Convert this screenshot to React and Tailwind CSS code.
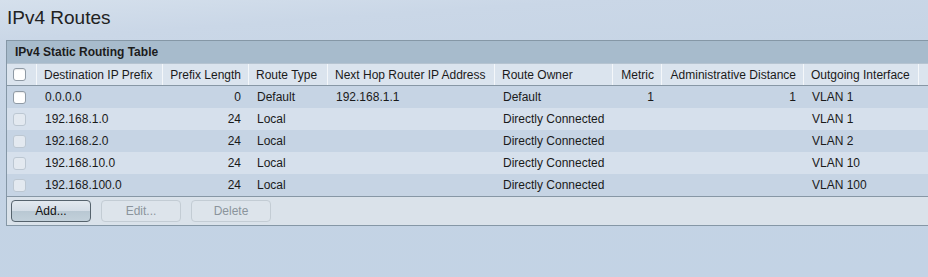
import React from "react";

const cols = [
  { w: 30, key: "cb" },
  { w: 126, key: "dest", label: "Destination IP Prefix" },
  { w: 86, key: "len", label: "Prefix Length", right: true },
  { w: 79, key: "type", label: "Route Type" },
  { w: 167, key: "hop", label: "Next Hop Router IP Address" },
  { w: 118, key: "owner", label: "Route Owner" },
  { w: 49, key: "metric", label: "Metric", right: true },
  { w: 142, key: "ad", label: "Administrative Distance", right: true },
  { w: 115, key: "out", label: "Outgoing Interface" },
  { w: 40, key: "x", label: "" },
];

const rows = [
  { dest: "0.0.0.0", len: "0", type: "Default", hop: "192.168.1.1", owner: "Default", metric: "1", ad: "1", out: "VLAN 1", enabled: true },
  { dest: "192.168.1.0", len: "24", type: "Local", hop: "", owner: "Directly Connected", metric: "", ad: "", out: "VLAN 1" },
  { dest: "192.168.2.0", len: "24", type: "Local", hop: "", owner: "Directly Connected", metric: "", ad: "", out: "VLAN 2" },
  { dest: "192.168.10.0", len: "24", type: "Local", hop: "", owner: "Directly Connected", metric: "", ad: "", out: "VLAN 10" },
  { dest: "192.168.100.0", len: "24", type: "Local", hop: "", owner: "Directly Connected", metric: "", ad: "", out: "VLAN 100" },
];

function Check({ enabled }) {
  return enabled ? (
    <div className="w-[13px] h-[13px] rounded-[3px] bg-white border border-[#8f9aa5] shadow-[inset_0_1px_1px_rgba(0,0,0,0.08)]" />
  ) : (
    <div className="w-[13px] h-[13px] rounded-[3px] bg-[#e3e9f0] border border-[#bcc7d2]" />
  );
}

export default function App() {
  return (
    <div
      className="w-[928px] h-[277px] overflow-hidden text-[#1a1a1a] bg-[linear-gradient(176deg,#d5e0ec_0%,#cad7e7_12%,#c4d3e4_40%,#c3d3e5_100%)]"
      style={{ fontFamily: '"Liberation Sans", Arial, sans-serif' }}
    >
      <div className="pl-[7px] pt-[6px] h-[40px] text-[19px] leading-[24px] text-[#222]">IPv4 Routes</div>
      <div className="ml-[6px] w-[960px] border border-[#8597a6] border-r-0">
        <div className="h-[22px] bg-[#a7bbcc] pl-[8px] flex items-center text-[12px] font-bold text-[#1c1c1c]">
          IPv4 Static Routing Table
        </div>
        <div className="flex h-[23px] bg-[#dbe4ee] border-t border-[#b6c4d1] border-b border-b-[#8797a5] text-[12px]">
          {cols.map((c, i) => (
            <div
              key={c.key}
              style={{ width: c.w }}
              className={`shrink-0 flex items-center px-[7px] border-r border-[#f4f7fa] whitespace-nowrap ${c.right ? "justify-end" : ""} ${i === 0 ? "justify-center pl-[3px]" : ""}`}
            >
              {i === 0 ? <Check enabled /> : c.label}
            </div>
          ))}
        </div>
        {rows.map((r, ri) => (
          <div
            key={ri}
            className={`flex h-[22px] text-[12px] ${ri % 2 === 0 ? "bg-[#c6d4e4]" : "bg-[#d6e0ec]"}`}
          >
            {cols.map((c, i) => (
              <div
                key={c.key}
                style={{ width: c.w }}
                className={`shrink-0 flex items-center px-[8px] whitespace-nowrap ${c.right ? "justify-end" : ""} ${i === 0 ? "justify-center pl-[3px]" : ""}`}
              >
                {i === 0 ? <Check enabled={r.enabled} /> : r[c.key] || ""}
              </div>
            ))}
          </div>
        ))}
        <div className="flex items-center gap-[10px] h-[29px] bg-[#dae2ea] border-t border-[#8797a5] pl-[4px] text-[12px]">
          <button className="w-[80px] h-[22px] rounded-[4px] border border-[#56636d] bg-[linear-gradient(#e3e9ef_0%,#d4dde6_50%,#b9c8d3_52%,#c2d0da_100%)] text-[#111]">
            Add...
          </button>
          <button className="w-[80px] h-[22px] rounded-[4px] border border-[#c3ccd4] bg-[#dde4eb] text-[#8b949c]">
            Edit...
          </button>
          <button className="w-[80px] h-[22px] rounded-[4px] border border-[#c3ccd4] bg-[#dde4eb] text-[#8b949c]">
            Delete
          </button>
        </div>
      </div>
    </div>
  );
}
